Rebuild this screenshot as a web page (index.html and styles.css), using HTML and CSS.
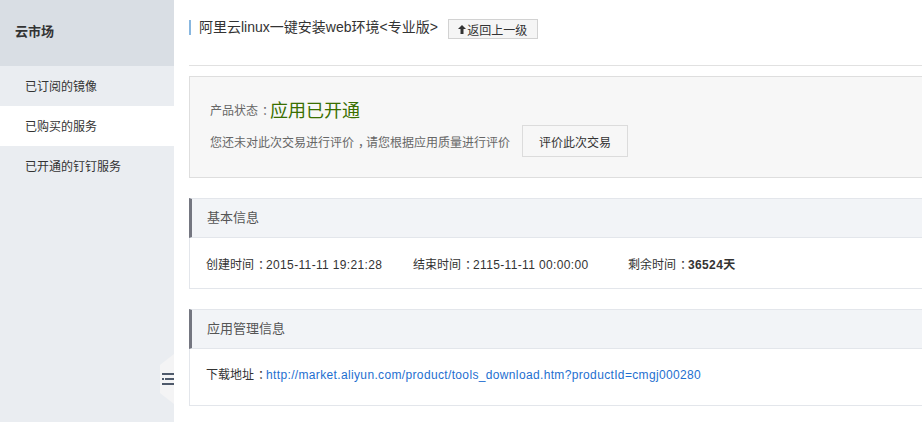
FILE: index.html
```html
<!DOCTYPE html>
<html lang="zh-CN">
<head>
  <meta charset="UTF-8">
  <title>已购买的服务</title>
  <link rel="stylesheet" href="styles.css">
</head>
<body>
  <div class="page">

    <!-- Sidebar -->
    <aside class="sidebar">
      <div class="side-title">云市场</div>
      <ul class="side-menu">
        <li>已订阅的镜像</li>
        <li class="active">已购买的服务</li>
        <li>已开通的钉钉服务</li>
      </ul>
      <div class="side-toggle">
        <svg width="12" height="14" viewBox="0 0 12 14">
          <rect x="0" y="1" width="12" height="2" fill="#4f5a6b"/>
          <rect x="0" y="6" width="2" height="2" fill="#4f5a6b"/>
          <rect x="3" y="6" width="9" height="2" fill="#4f5a6b"/>
          <rect x="0" y="11" width="12" height="2" fill="#4f5a6b"/>
        </svg>
      </div>
    </aside>

    <!-- Main -->
    <main class="main">
      <div class="page-head">
        <h1 class="page-title">阿里云linux一键安装web环境&lt;专业版&gt;</h1>
        <button class="btn-back">
          <svg width="8" height="9" viewBox="0 0 8 9"><path d="M4 0 L8 4 L5.5 4 L5.5 9 L2.5 9 L2.5 4 L0 4 Z" fill="#333"/></svg>返回上一级
        </button>
      </div>

      <div class="status-box">
        <div class="status-line">
          <span class="status-label">产品状态<span class="punct">：</span></span><span class="status-value">应用已开通</span>
        </div>
        <div class="rate-line">
          <span class="rate-tip">您还未对此次交易进行评价<span class="punct">，</span>请您根据应用质量进行评价</span>
          <button class="btn-rate">评价此次交易</button>
        </div>
      </div>

      <section class="panel">
        <div class="panel-head">基本信息</div>
        <div class="panel-body info-row">
          <span class="info-item created">创建时间<span class="punct">：</span><span class="num">2015-11-11 19:21:28</span></span>
          <span class="info-item ends">结束时间<span class="punct">：</span><span class="num">2115-11-11 00:00:00</span></span>
          <span class="info-item">剩余时间<span class="punct">：</span><b class="num">36524</b><b>天</b></span>
        </div>
      </section>

      <section class="panel">
        <div class="panel-head">应用管理信息</div>
        <div class="panel-body link-row">
          下载地址<span class="punct">：</span><a class="num" href="#">http://market.aliyun.com/product/tools_download.htm?productId=cmgj000280</a>
        </div>
      </section>
    </main>

  </div>
</body>
</html>
```

FILE: styles.css
```css
/* Page frame */
html, body {
  margin: 0;
  height: 100%;
  overflow: hidden;
}
body {
  font-family: "Liberation Sans", "Noto Sans CJK SC", sans-serif;
  font-size: 12px;
  color: #333;
  background: #fff;
}
.page {
  display: flex;
  height: 100%;
}
/* full-width colon / comma drawn centred in its cell */
.punct {
  padding-left: 4px;
  letter-spacing: -4px;
}
.num {
  letter-spacing: 0.35px;
}

/* Sidebar */
.sidebar {
  position: relative;
  width: 174px;
  flex-shrink: 0;
  background: #eaedf1;
}
.side-title {
  height: 66px;
  line-height: 64px;
  padding-left: 15px;
  background: #d9dee4;
  font-size: 13px;
  font-weight: bold;
  color: #333;
}
.side-menu {
  list-style: none;
  margin: 0;
  padding: 0;
}
.side-menu li {
  height: 40px;
  box-sizing: border-box;
  padding-top: 2px;
  line-height: 38px;
  padding-left: 25px;
  color: #333;
}
.side-menu li.active {
  background: #fff;
}
.side-toggle {
  position: absolute;
  right: 0;
  top: 354px;
  width: 14px;
  height: 50px;
  background: #f4f4f5;
  clip-path: polygon(100% 0, 0 22%, 0 78%, 100% 100%);
  display: flex;
  align-items: center;
  justify-content: flex-end;
}

/* Main column */
.main {
  flex: 1;
  min-width: 0;
  padding-left: 15px;
  margin-right: -2px;
}
.page-head {
  display: flex;
  align-items: center;
  height: 66px;
  box-sizing: border-box;
  border-bottom: 1px solid #e1e1e1;
  padding-bottom: 10px;
}
.page-title {
  margin: 0;
  padding-left: 8px;
  border-left: 2px solid #88b7e0;
  font-size: 14px;
  font-weight: normal;
  line-height: 15px;
  color: #333;
}
.btn-back {
  margin-left: 10px;
  margin-top: 3px;
  height: 20px;
  width: 90px;
  padding: 0;
  border: 1px solid #d2d2d2;
  background: #f5f5f5;
  font-family: inherit;
  font-size: 12px;
  color: #333;
  display: flex;
  align-items: center;
  justify-content: center;
  gap: 1px;
}

/* Status box */
.status-box {
  margin-top: 10px;
  height: 102px;
  box-sizing: border-box;
  padding: 19px 0 0 20px;
  background: #f7f7f7;
  border: 1px solid #dedede;
}
.status-line {
  height: 26px;
  display: flex;
  align-items: center;
}
.status-label {
  color: #666;
}
.status-value {
  font-size: 18px;
  color: #3a6f00;
}
.rate-line {
  display: flex;
  align-items: center;
  margin-top: 3px;
}
.rate-tip {
  color: #666;
  margin-right: 12px;
}
.btn-rate {
  width: 106px;
  height: 32px;
  padding: 0;
  border: 1px solid #dcdcdc;
  background: #f7f7f7;
  font-family: inherit;
  font-size: 12px;
  color: #333;
}

/* Panels */
.panel {
  margin-top: 20px;
}
.panel-head {
  height: 40px;
  line-height: 38px;
  box-sizing: border-box;
  padding-left: 15px;
  background: #f2f4f7;
  border-top: 1px solid #e3e6eb;
  border-bottom: 1px solid #e3e6eb;
  border-left: 3px solid #747680;
  font-size: 13px;
  color: #555;
}
.panel-body {
  border: 1px solid #e3e6eb;
  border-top: none;
  padding-left: 16px;
  color: #333;
}
.info-row {
  height: 50px;
  display: flex;
  align-items: center;
}
.info-item.created {
  width: 207px;
}
.info-item.ends {
  width: 215px;
}
.info-item b {
  font-weight: bold;
}
.link-row {
  height: 56px;
  line-height: 52px;
}
.link-row a {
  color: #1e6fd0;
  text-decoration: none;
}
```
